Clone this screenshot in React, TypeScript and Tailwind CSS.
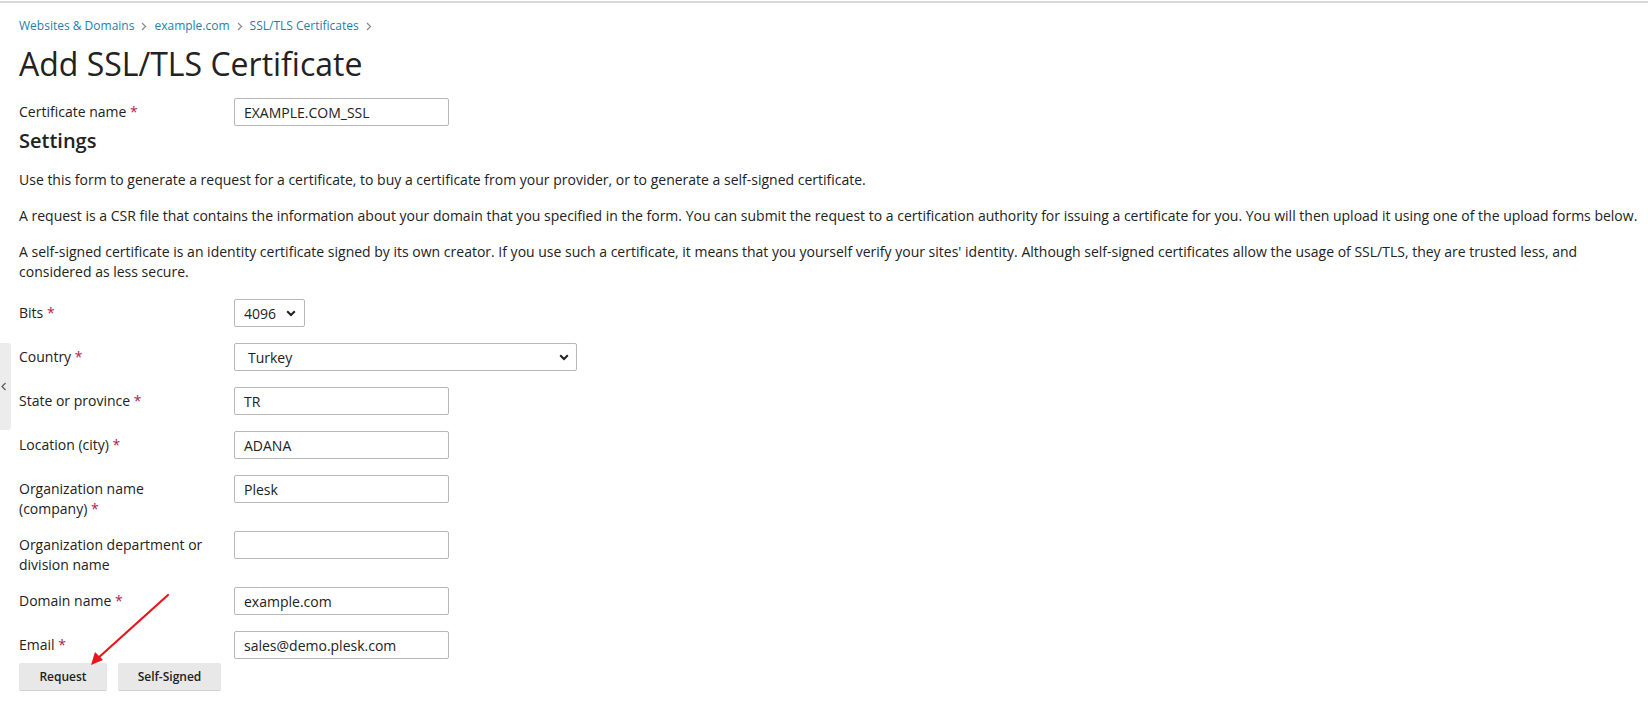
import React from "react";

const Star = () => <span className="text-[#b5174b]"> *</span>;

const Chevron = () => (
  <svg width="10" height="7" viewBox="0 0 10 7" className="shrink-0">
    <path d="M1.2 1.2 L5 5 L8.8 1.2" fill="none" stroke="#222" strokeWidth="2" />
  </svg>
);

const Crumb = ({ children }: { children: React.ReactNode }) => (
  <>
    <a className="text-[#1f7fa8]">{children}</a>
    <svg width="6" height="9" viewBox="0 0 6 9" className="mx-[7px]">
      <path d="M1 1 L4.5 4.5 L1 8" fill="none" stroke="#8a8a8a" strokeWidth="1.2" />
    </svg>
  </>
);

const TextInput = ({ value }: { value: string }) => (
  <div className="w-[215px] h-[28px] border border-[#b8b8b8] rounded-[2px] bg-white pl-[9px] flex items-center text-[14px] text-[#222]">
    {value}
  </div>
);

const Row = ({
  label,
  required,
  children,
}: {
  label: React.ReactNode;
  required?: boolean;
  children: React.ReactNode;
}) => (
  <div className="grid grid-cols-[215px_1fr] mb-[12px]">
    <div className="pt-[4px] leading-[20px] pr-4 text-[#222]">
      {label}
      {required && <Star />}
    </div>
    <div className="pb-[4px]">{children}</div>
  </div>
);

export default function App() {
  return (
    <div
      className="relative w-[1648px] h-[718px] bg-white overflow-hidden text-[14px] text-[#222]"
      style={{ fontFamily: '"Open Sans", "Noto Sans", sans-serif' }}
    >
      <div className="h-[2px] mt-[1px] bg-[#d8d8d8]" />

      {/* left collapse tab */}
      <div className="absolute left-0 top-[343px] w-[11px] h-[87px] bg-[#ececec] rounded-r-[3px] flex items-center justify-start">
        <svg width="6" height="9" viewBox="0 0 6 9" className="ml-[1px]">
          <path d="M4.5 1 L1 4.5 L4.5 8" fill="none" stroke="#555" strokeWidth="1.1" />
        </svg>
      </div>

      <div className="pl-[19px]">
        <div className="flex items-center mt-[14px] h-[18px] text-[12px]">
          <Crumb>Websites &amp; Domains</Crumb>
          <Crumb>example.com</Crumb>
          <Crumb>SSL/TLS Certificates</Crumb>
        </div>

        <h1 className="text-[32px] leading-[40px] mt-[9px] font-normal text-[#222]">
          Add SSL/TLS Certificate
        </h1>

        <div className="mt-[14px]">
          <Row label="Certificate name" required>
            <TextInput value="EXAMPLE.COM_SSL" />
          </Row>
        </div>

        <h2 className="text-[20px] leading-[26px] font-semibold -mt-[14px] text-[#222]">
          Settings
        </h2>

        <div className="mt-[16px] leading-[20px] space-y-[16px]">
          <p>
            Use this form to generate a request for a certificate, to buy a certificate from your provider, or to
            generate a self-signed certificate.
          </p>
          <p>
            A request is a CSR file that contains the information about your domain that you specified in the form.
            You can submit the request to a certification authority for issuing a certificate for you. You will then
            upload it using one of the upload forms below.
          </p>
          <p>
            A self-signed certificate is an identity certificate signed by its own creator. If you use such a
            certificate, it means that you yourself verify your sites' identity. Although self-signed certificates
            allow the usage of SSL/TLS, they are trusted less, and considered as less secure.
          </p>
        </div>

        <div className="mt-[17px]">
          <Row label="Bits" required>
            <div className="w-[71px] h-[28px] border border-[#b8b8b8] rounded-[2px] pl-[9px] pr-[8px] flex items-center justify-between">
              <span>4096</span>
              <Chevron />
            </div>
          </Row>
          <Row label="Country" required>
            <div className="w-[343px] h-[28px] border border-[#b8b8b8] rounded-[2px] pl-[13px] pr-[7px] flex items-center justify-between">
              <span>Turkey</span>
              <Chevron />
            </div>
          </Row>
          <Row label="State or province" required>
            <TextInput value="TR" />
          </Row>
          <Row label="Location (city)" required>
            <TextInput value="ADANA" />
          </Row>
          <Row
            label={
              <>
                Organization name
                <br />
                (company)
              </>
            }
            required
          >
            <TextInput value="Plesk" />
          </Row>
          <Row
            label={
              <>
                Organization department or
                <br />
                division name
              </>
            }
          >
            <TextInput value="" />
          </Row>
          <Row label="Domain name" required>
            <TextInput value="example.com" />
          </Row>
          <div className="grid grid-cols-[215px_1fr]">
            <div className="pt-[4px] leading-[20px]">
              Email
              <Star />
            </div>
            <div>
              <TextInput value="sales@demo.plesk.com" />
            </div>
          </div>
        </div>

        <div className="flex gap-[11px] mt-[4px]">
          <button className="w-[88px] h-[28px] bg-[#e8e8e8] border-b border-[#d0d0d0] rounded-[2px] text-[12px] font-semibold text-[#222]">
            Request
          </button>
          <button className="w-[103px] h-[28px] bg-[#e8e8e8] border-b border-[#d0d0d0] rounded-[2px] text-[12px] font-semibold text-[#222]">
            Self-Signed
          </button>
        </div>
      </div>

      {/* annotation arrow */}
      <svg className="absolute left-0 top-0 pointer-events-none" width="1648" height="718">
        <line x1="168" y1="595" x2="97" y2="659" stroke="#e8161c" strokeWidth="2.2" strokeLinecap="round" />
        <path d="M91 665 L95 652 L103 660 Z" fill="#e8161c" />
      </svg>
    </div>
  );
}
